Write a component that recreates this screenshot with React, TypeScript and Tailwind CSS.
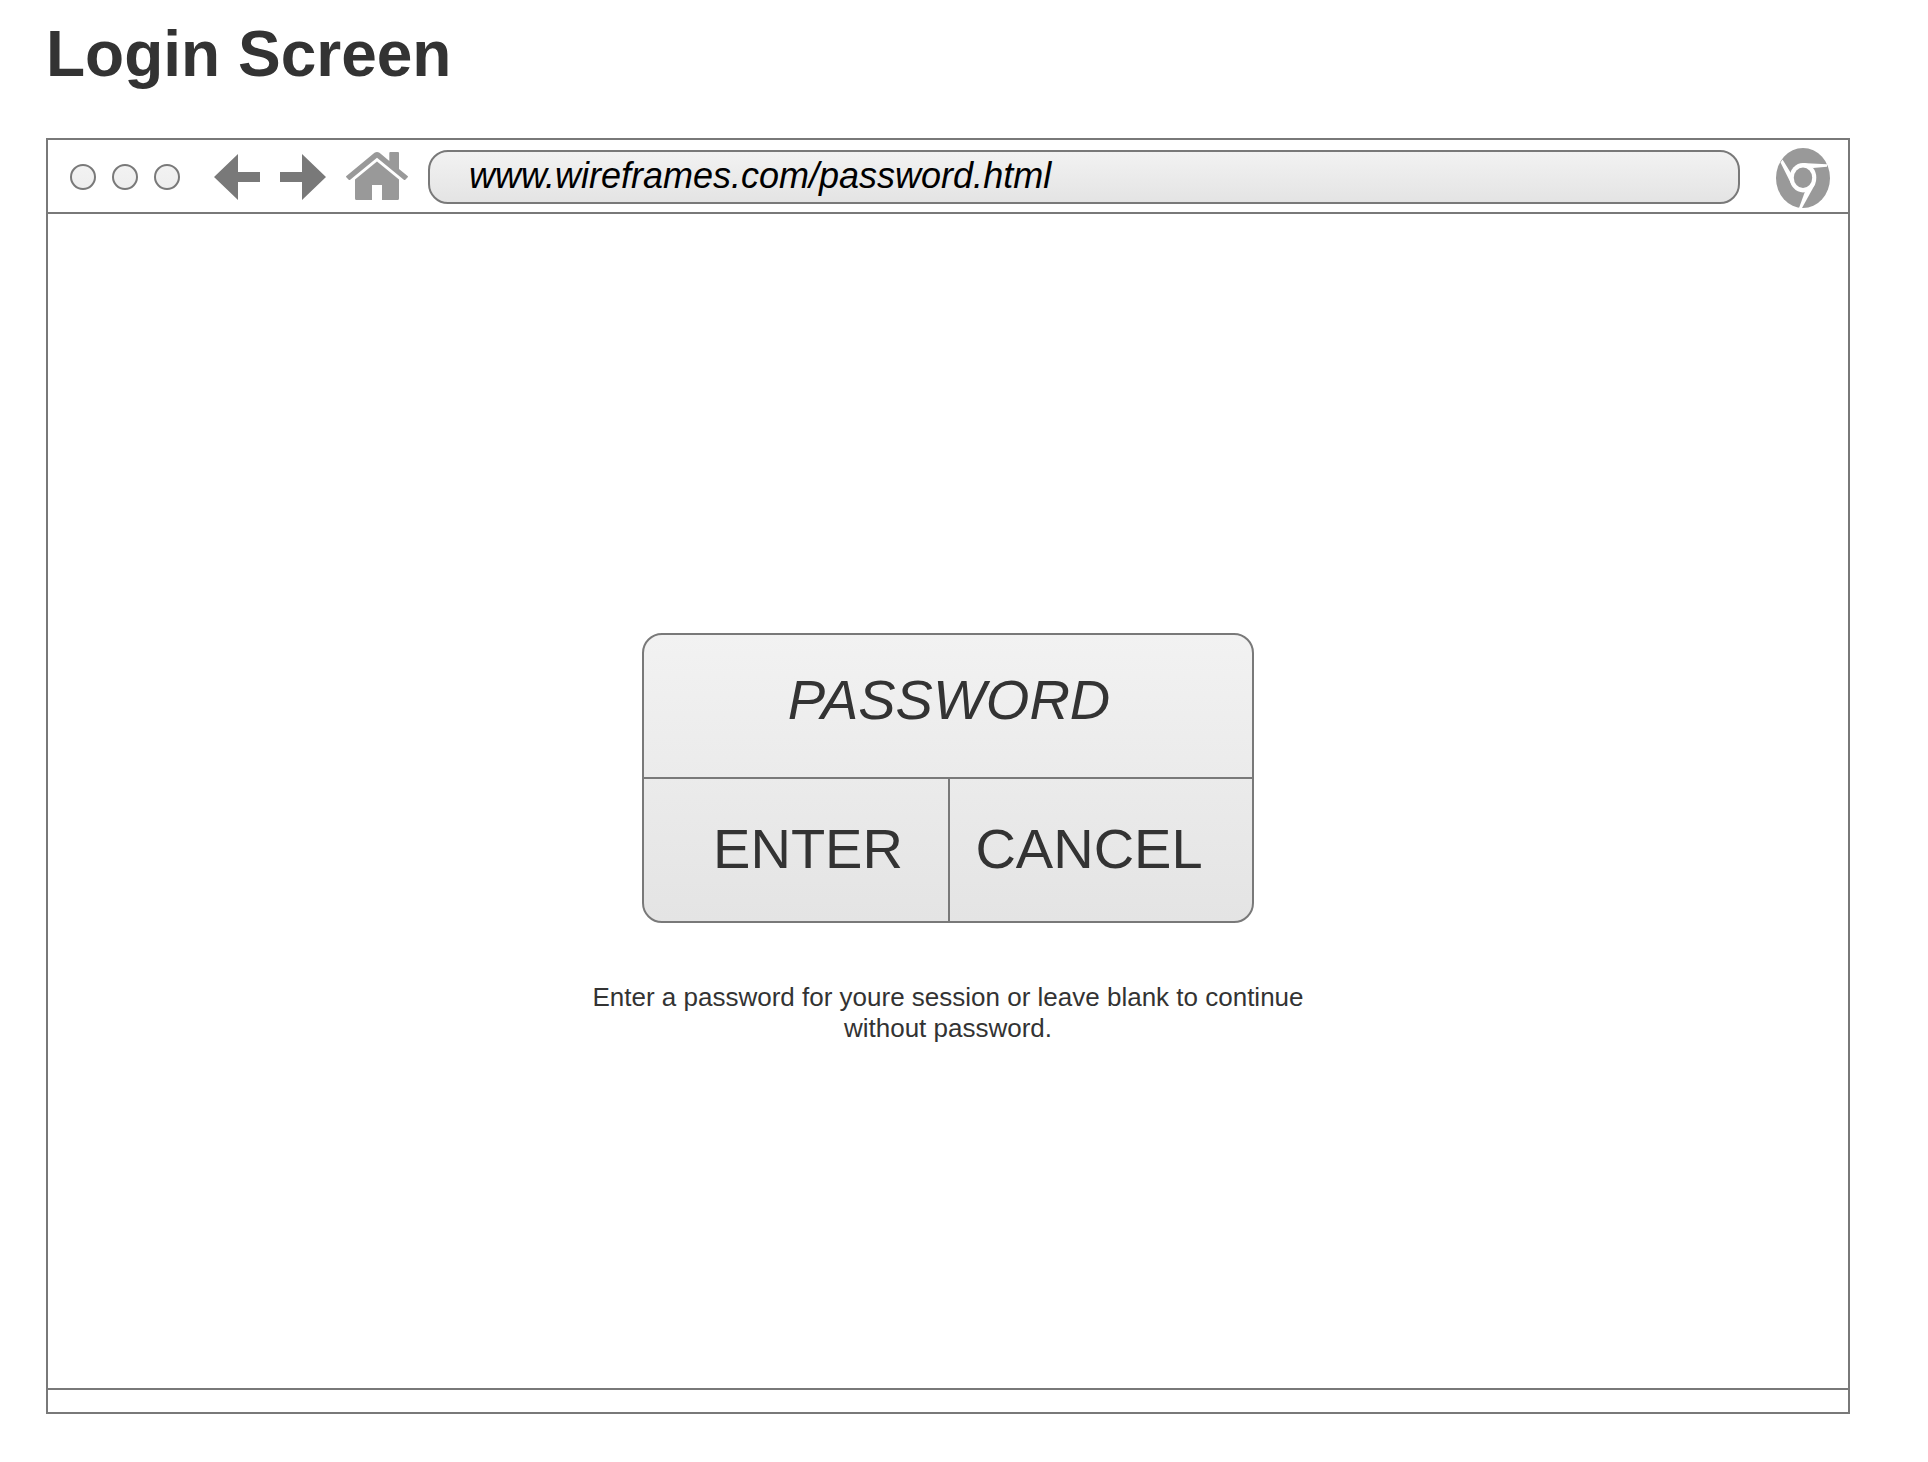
const BackArrow = () => (
  <svg width="46" height="46" viewBox="0 0 46 46" fill="#797979" aria-hidden="true">
    <path d="M0 23 24 0V18H46V28H24V46Z" />
  </svg>
);

const ForwardArrow = () => (
  <svg width="46" height="46" viewBox="0 0 46 46" fill="#797979" aria-hidden="true">
    <path d="M46 23 22 0V18H0V28H22V46Z" />
  </svg>
);

const HomeIcon = () => (
  <svg width="62" height="50" viewBox="0 0 62 50" fill="#999999" aria-hidden="true">
    <path d="M28.5 .8Q31-.8 33.5 .8L43.3 9V1Q43.3 0 44.3 0H52Q53 0 53 1V17L61.6 24Q62.3 24.6 61.7 25.3L59.3 27.8Q58.6 28.4 57.8 27.8L31 5.8 4.2 27.8Q3.4 28.4 2.7 27.8L.3 25.3Q-.3 24.6 .4 24Z" />
    <path d="M31 9.6 53 27.6V46.5Q53 48 51.5 48H36V33H26V48H10.500Q9 48 9 46.500V27.6Z" />
  </svg>
);

const ChromeIcon = () => (
  <svg width="54" height="60" viewBox="0 0 54 60" aria-hidden="true">
    <ellipse cx="27" cy="30" rx="27" ry="30" fill="#999999" />
    <g fill="#ffffff">
      <ellipse cx="27" cy="29.700" rx="13.300" ry="14.700" />
      <path d="M26 15 51 16.300V18.800L37 20Z" />
      <path d="M6.500 11.500 4.500 14.500 16.500 38.500 20 27 15 25.300Z" />
      <path d="M23 60H26L39.500 35.500 34 37 28.800 44Z" />
    </g>
    <ellipse cx="27" cy="29.700" rx="9.200" ry="10.200" fill="#999999" />
  </svg>
);

const WINDOW_BUTTONS = ['Close', 'Minimize', 'Maximize'];

export default function App() {
  return (
    <main className="flex min-h-screen flex-col bg-white pt-[22px] pr-[78px] pb-12 pl-[46px] font-['Liberation_Sans',Arial,sans-serif] text-[#333333]">
      <h1 className="mb-[52px] text-[64px] leading-[64px] font-bold">Login Screen</h1>

      <section className="flex flex-1 flex-col border-2 border-[#797979]">
        <header className="flex h-[74px] items-center border-b-2 border-[#797979] pt-0.5 pr-[18px] pl-[22px]">
          <div className="flex gap-4">
            {WINDOW_BUTTONS.map((name) => (
              <button
                key={name}
                type="button"
                aria-label={name}
                className="size-[26px] rounded-full border-2 border-[#797979] bg-linear-to-b from-[#f2f2f2] to-[#eeeeee]"
              />
            ))}
          </div>
          <nav className="ml-[34px] flex items-center gap-5">
            <button type="button" aria-label="Back">
              <BackArrow />
            </button>
            <button type="button" aria-label="Forward">
              <ForwardArrow />
            </button>
            <button type="button" aria-label="Home">
              <HomeIcon />
            </button>
          </nav>
          <input
            type="text"
            aria-label="Address"
            defaultValue="www.wireframes.com/password.html"
            className="ml-5 h-[54px] min-w-0 flex-1 rounded-[20px] border-2 border-[#797979] bg-linear-to-b from-[#f2f2f2] to-[#e4e4e4] pr-6 pb-0.5 pl-[39px] text-[36px] leading-[44px] text-black italic"
          />
          <div className="mt-0.5 ml-9">
            <ChromeIcon />
          </div>
        </header>

        <div className="flex flex-1 flex-col items-center justify-center pt-[74px]">
          <form className="w-full max-w-[612px] overflow-hidden rounded-[20px] border-2 border-[#797979] bg-linear-to-b from-[#f2f2f2] to-[#e4e4e4] text-[56px] leading-[64px]">
            <input
              type="password"
              aria-label="Password"
              placeholder="PASSWORD"
              className="block h-[142px] w-full pb-3 pl-0.5 text-center italic placeholder:text-[#333333] placeholder:opacity-100"
            />
            <div className="grid h-[144px] grid-cols-2 border-t-2 border-[#797979]">
              <button type="submit" className="pb-0.5 pl-6">
                ENTER
              </button>
              <button type="button" className="border-l-2 border-[#797979] pr-6 pb-0.5">
                CANCEL
              </button>
            </div>
          </form>
          <p className="mt-[59px] max-w-[760px] text-center text-[26px] leading-[31px]">
            Enter a password for youre session or leave blank to continue without password.
          </p>
        </div>

        <footer className="h-6 border-t-2 border-[#797979]" />
      </section>
    </main>
  );
}
